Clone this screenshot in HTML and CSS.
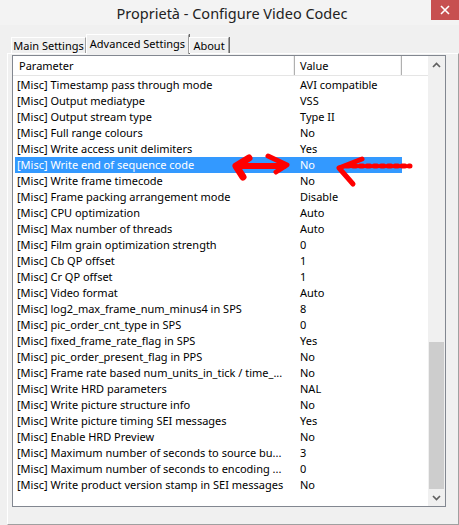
FILE: index.html
```html
<!DOCTYPE html>
<html>
<head>
<meta charset="utf-8">
<link rel="stylesheet" href="styles.css">
</head>
<body>
<div class="window">
  <div class="titlebar">
    <div class="title">Proprietà - Configure Video Codec</div>
    <div class="close"><svg width="10" height="10" viewBox="0 0 10 10"><path d="M1 1L9 9M9 1L1 9" stroke="#fff" stroke-width="1.6"/></svg></div>
  </div>
  <div class="tabs">
    <div class="tab t1">Main Settings</div>
    <div class="tab active">Advanced Settings</div>
    <div class="tab t3">About</div>
  </div>
  <div class="page">
    <div class="list">
      <div class="listmain">
        <div class="header">
          <div class="hcell c1">Parameter</div>
          <div class="hcell c2">Value</div>
          <div class="hcell c3"></div>
        </div>
        <div class="rows">
          <div class="row"><span class="p">[Misc] Timestamp pass through mode</span><span class="v">AVI compatible</span></div>
          <div class="row"><span class="p">[Misc] Output mediatype</span><span class="v">VSS</span></div>
          <div class="row"><span class="p">[Misc] Output stream type</span><span class="v">Type II</span></div>
          <div class="row"><span class="p">[Misc] Full range colours</span><span class="v">No</span></div>
          <div class="row"><span class="p">[Misc] Write access unit delimiters</span><span class="v">Yes</span></div>
          <div class="row sel"><span class="p">[Misc] Write end of sequence code</span><span class="v">No</span></div>
          <div class="row"><span class="p">[Misc] Write frame timecode</span><span class="v">No</span></div>
          <div class="row"><span class="p">[Misc] Frame packing arrangement mode</span><span class="v">Disable</span></div>
          <div class="row"><span class="p">[Misc] CPU optimization</span><span class="v">Auto</span></div>
          <div class="row"><span class="p">[Misc] Max number of threads</span><span class="v">Auto</span></div>
          <div class="row"><span class="p">[Misc] Film grain optimization strength</span><span class="v">0</span></div>
          <div class="row"><span class="p">[Misc] Cb QP offset</span><span class="v">1</span></div>
          <div class="row"><span class="p">[Misc] Cr QP offset</span><span class="v">1</span></div>
          <div class="row"><span class="p">[Misc] Video format</span><span class="v">Auto</span></div>
          <div class="row"><span class="p">[Misc] log2_max_frame_num_minus4 in SPS</span><span class="v">8</span></div>
          <div class="row"><span class="p">[Misc] pic_order_cnt_type in SPS</span><span class="v">0</span></div>
          <div class="row"><span class="p">[Misc] fixed_frame_rate_flag in SPS</span><span class="v">Yes</span></div>
          <div class="row"><span class="p">[Misc] pic_order_present_flag in PPS</span><span class="v">No</span></div>
          <div class="row"><span class="p">[Misc] Frame rate based num_units_in_tick / time_...</span><span class="v">No</span></div>
          <div class="row"><span class="p">[Misc] Write HRD parameters</span><span class="v">NAL</span></div>
          <div class="row"><span class="p">[Misc] Write picture structure info</span><span class="v">No</span></div>
          <div class="row"><span class="p">[Misc] Write picture timing SEI messages</span><span class="v">Yes</span></div>
          <div class="row"><span class="p">[Misc] Enable HRD Preview</span><span class="v">No</span></div>
          <div class="row"><span class="p">[Misc] Maximum number of seconds to source bu...</span><span class="v">3</span></div>
          <div class="row"><span class="p">[Misc] Maximum number of seconds to encoding ...</span><span class="v">0</span></div>
          <div class="row"><span class="p">[Misc] Write product version stamp in SEI messages</span><span class="v">No</span></div>
        </div>
      </div>
      <div class="scrollbar">
        <div class="sbtn"><svg width="9" height="6" viewBox="0 0 9 6"><path d="M1 5L4.5 1.5L8 5" fill="none" stroke="#606060" stroke-width="1.7"/></svg></div>
        <div class="track"><div class="thumb"></div></div>
        <div class="sbtn"><svg width="9" height="6" viewBox="0 0 9 6"><path d="M1 1L4.5 4.5L8 1" fill="none" stroke="#606060" stroke-width="1.7"/></svg></div>
      </div>
    </div>
  </div>
  <svg class="annot" width="459" height="525" viewBox="0 0 459 525">
    <g fill="none" stroke="#f00" stroke-linecap="round" stroke-linejoin="round">
      <path d="M236 166L249 158M236 166L243 177" stroke-width="7"/>
      <path d="M236 166L284 166" stroke-width="6"/>
      <path d="M268 156L287 165L276 172" stroke-width="5"/>
      <path d="M339 168L362 159M339 168L353 184" stroke-width="5"/>
      <path d="M346 166L410 166" stroke-width="5" stroke-dasharray="3 4"/>
    </g>
  </svg>
</div>
</body>
</html>
```
FILE: styles.css
```css
html, body {
  margin: 0;
  padding: 0;
}
body {
  background: #f0f0f0;
  font-family: "Noto Sans", "Open Sans", sans-serif;
  font-size: 11px;
  color: #000;
}
.window {
  position: relative;
  width: 459px;
  height: 525px;
  overflow: hidden;
}
.titlebar {
  height: 25px;
  display: grid;
  grid-template-columns: 1fr auto 1fr;
  background: #f3f3f3;
}
.title {
  grid-column: 2;
  font-size: 14.5px;
  line-height: 26px;
  color: #222;
  padding-left: 5px;
}
.close {
  grid-column: 3;
  justify-self: end;
  width: 28px;
  height: 20px;
  background: #c75050;
  display: flex;
  align-items: center;
  justify-content: center;
}
.tabs {
  height: 28px;
  display: flex;
  align-items: flex-end;
  padding-left: 11px;
  position: relative;
  z-index: 2;
}
.tab {
  height: 15px;
  line-height: 16px;
  padding: 0;
  text-align: center;
  border: 1px solid #a0a0a0;
  border-left-color: #fff;
  border-top-color: #fff;
  border-bottom: none;
  box-shadow: 1px 0 0 #696969;
  background: #f0f0f0;
  white-space: nowrap;
}
.t1 { width: 73px; }
.tab.active {
  width: 101px;
  height: 19px;
  line-height: 17px;
  margin-bottom: -1px;
}
.t3 { width: 38px; }
.page {
  margin-left: 7px;
  width: 446px;
  height: 469px;
  border: 1px solid #a0a0a0;
  border-left-color: #fff;
  border-top-color: #fff;
  box-shadow: 1px 1px 0 #696969;
  padding: 1px 0 0 4px;
  box-sizing: content-box;
}
.list {
  width: 432px;
  height: 450px;
  border: 1px solid #828790;
  background: #fff;
  display: flex;
}
.listmain {
  width: 415px;
  overflow: hidden;
}
.header {
  height: 19px;
  border-bottom: 1px solid #e5e5e5;
  display: flex;
}
.hcell {
  height: 19px;
  line-height: 19px;
  box-sizing: border-box;
  border-right: 1px solid #b0b0b0;
  box-shadow: inset -1px 0 0 #f0f0f0;
  white-space: nowrap;
}
.c1 { width: 282px; padding-left: 6px; }
.c2 { width: 107px; padding-left: 5px; }
.c3 { width: 26px; border-right: none; box-shadow: none; }
.rows {
  padding-top: 1px;
}
.row {
  height: 16px;
  line-height: 16px;
  margin-left: 2px;
  width: 387px;
  display: flex;
  white-space: nowrap;
}
.row.sel {
  background: #3399ff;
  color: #fff;
}
.p {
  width: 283px;
  padding-left: 2px;
  box-sizing: border-box;
  overflow: hidden;
}
.v {
  padding-left: 2px;
}
.scrollbar {
  width: 17px;
  display: flex;
  flex-direction: column;
  background: #f0f0f0;
}
.sbtn {
  height: 17px;
  display: flex;
  align-items: center;
  justify-content: center;
}
.track {
  flex: 1;
  display: flex;
  flex-direction: column;
  justify-content: flex-end;
}
.thumb {
  height: 147px;
  margin: 0 1px;
  background: #cdcdcd;
}
.annot {
  position: absolute;
  left: 0;
  top: 0;
  pointer-events: none;
  z-index: 5;
}
```
